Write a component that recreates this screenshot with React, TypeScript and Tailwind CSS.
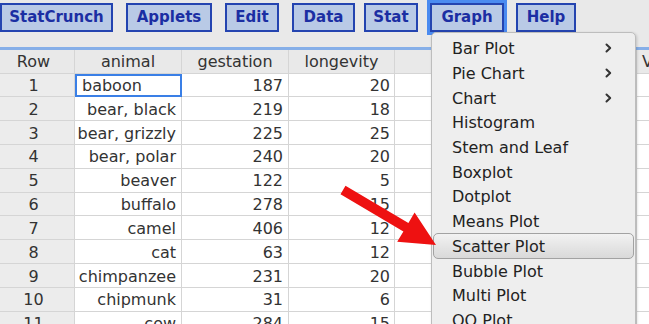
import React from "react";

const rows: [string, string, string, string][] = [
  ["1", "baboon", "187", "20"],
  ["2", "bear, black", "219", "18"],
  ["3", "bear, grizzly", "225", "25"],
  ["4", "bear, polar", "240", "20"],
  ["5", "beaver", "122", "5"],
  ["6", "buffalo", "278", "15"],
  ["7", "camel", "406", "12"],
  ["8", "cat", "63", "12"],
  ["9", "chimpanzee", "231", "20"],
  ["10", "chipmunk", "31", "6"],
  ["11", "cow", "284", "15"],
];

const menuItems: [string, boolean][] = [
  ["Bar Plot", true],
  ["Pie Chart", true],
  ["Chart", true],
  ["Histogram", false],
  ["Stem and Leaf", false],
  ["Boxplot", false],
  ["Dotplot", false],
  ["Means Plot", false],
  ["Scatter Plot", false],
  ["Bubble Plot", false],
  ["Multi Plot", false],
  ["QQ Plot", false],
];

function Btn({ label, w, ml, focus }: { label: string; w: string; ml: string; focus?: boolean }) {
  return (
    <div
      className={`${w} ${ml} h-[29px] shrink-0 flex items-center justify-center border-2 border-[#2444b0] bg-[#b9cae6] text-[#1b2ea3] font-bold text-[15px] ${
        focus ? "outline outline-[3px] outline-[#4b8bf0]" : ""
      }`}
    >
      {label}
    </div>
  );
}

function Chevron() {
  return (
    <svg width="7" height="10" viewBox="0 0 7 10" className="shrink-0">
      <polyline points="1.5,1.5 5.2,5 1.5,8.5" fill="none" stroke="#333" strokeWidth="2" strokeLinecap="round" strokeLinejoin="round" />
    </svg>
  );
}

export default function App() {
  const cell = "h-full border-r border-b border-[#d5d5d5] flex items-center shrink-0 pt-[2px]";
  return (
    <div className="relative w-[649px] h-[324px] overflow-hidden bg-white font-['DejaVu_Sans',Verdana,sans-serif]">
      {/* toolbar */}
      <div className="h-[47px] bg-[#e9e9e9] flex items-start pt-[3px]">
        <Btn label="StatCrunch" w="w-[113px]" ml="ml-0" />
        <Btn label="Applets" w="w-[86px]" ml="ml-[13px]" />
        <Btn label="Edit" w="w-[54px]" ml="ml-[13px]" />
        <Btn label="Data" w="w-[63px]" ml="ml-[13px]" />
        <Btn label="Stat" w="w-[54px]" ml="ml-[9px]" />
        <Btn label="Graph" w="w-[74px]" ml="ml-[12px]" focus />
        <Btn label="Help" w="w-[60px]" ml="ml-[12px]" />
      </div>
      <div className="h-[3px] bg-[#86afe8]" />

      {/* table */}
      <div className="text-[16px] text-[#333]">
        <div className="flex h-[23.5px]">
          <div className={`${cell} w-[75px] bg-[#e9e9e9] justify-center pr-[7px]`}>Row</div>
          <div className={`${cell} w-[107px] bg-[#e9e9e9] justify-center`}>animal</div>
          <div className={`${cell} w-[107px] bg-[#e9e9e9] justify-center`}>gestation</div>
          <div className={`${cell} w-[106px] bg-[#e9e9e9] justify-center`}>longevity</div>
          <div className={`${cell} w-[121px] bg-[#e9e9e9]`} />
          <div className={`${cell} w-[121px] bg-[#e9e9e9]`} />
          <div className={`${cell} w-[100px] bg-[#e9e9e9] pl-[5px]`}>V</div>
        </div>
        {rows.map(([n, a, g, l]) => (
          <div key={n} className="flex h-[23.84px]">
            <div className={`${cell} w-[75px] bg-[#ececec] justify-center pr-[7px]`}>{n}</div>
            {n === "1" ? (
              <div className="h-full w-[107px] shrink-0 border-2 border-[#3a7fe6] flex items-center pl-[5px] pt-[2px] bg-white">
                {a}
              </div>
            ) : (
              <div className={`${cell} w-[107px] justify-end pr-[5px] overflow-hidden whitespace-nowrap`}>{a}</div>
            )}
            <div className={`${cell} w-[107px] justify-end pr-[5px]`}>{g}</div>
            <div className={`${cell} w-[106px] justify-end pr-[4px]`}>{l}</div>
            <div className={`${cell} w-[121px]`} />
            <div className={`${cell} w-[121px]`} />
            <div className={`${cell} w-[100px]`} />
          </div>
        ))}
      </div>

      {/* menu */}
      <div className="absolute left-[431px] top-[32px] w-[205px] h-[310px] bg-[#eeeeee] border border-[#bdbdbd] rounded-[5px] shadow-[1px_1px_3px_rgba(0,0,0,0.18)] pt-[3px] text-[16px] text-[#222]">
        {menuItems.map(([label, sub]) => (
          <div key={label} className="relative h-[24.7px] flex items-center justify-between pl-[20px] pr-[23px]">
            {label === "Scatter Plot" && (
              <div className="absolute left-[1px] right-[1px] -top-[1px] -bottom-[1px] rounded-[5px] border border-[#a2a2a2] bg-gradient-to-b from-[#f2f2f2] to-[#d9d9d9]" />
            )}
            <span className="relative pt-[2px]">{label}</span>
            {sub && <Chevron />}
          </div>
        ))}
      </div>

      {/* red arrow */}
      <svg className="absolute left-0 top-0 pointer-events-none" width="649" height="324" viewBox="0 0 649 324">
        <polygon
          points="345.5,185.7 408.4,222.9 414.6,212.6 436,245 397.2,241.8 403.4,231.5 340.5,194.3"
          fill="#ee1111"
        />
      </svg>
    </div>
  );
}
